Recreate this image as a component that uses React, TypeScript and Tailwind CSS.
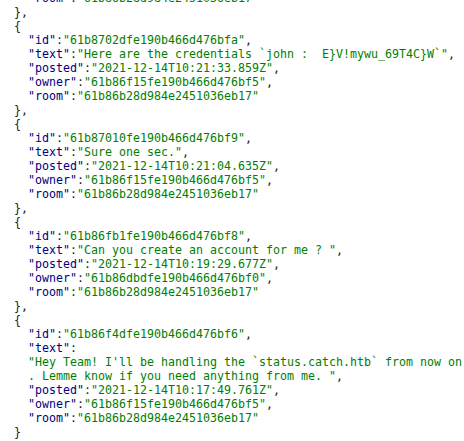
import React from "react";

type Msg = {
  id: string;
  text: string[];
  posted: string;
  owner: string;
  room: string;
  split?: boolean;
};

const messages: Msg[] = [
  {
    id: "61b8702dfe190b466d476bfa",
    text: ["Here are the credentials `john :  E}V!mywu_69T4C}W`"],
    posted: "2021-12-14T10:21:33.859Z",
    owner: "61b86f15fe190b466d476bf5",
    room: "61b86b28d984e2451036eb17",
  },
  {
    id: "61b87010fe190b466d476bf9",
    text: ["Sure one sec."],
    posted: "2021-12-14T10:21:04.635Z",
    owner: "61b86f15fe190b466d476bf5",
    room: "61b86b28d984e2451036eb17",
  },
  {
    id: "61b86fb1fe190b466d476bf8",
    text: ["Can you create an account for me ? "],
    posted: "2021-12-14T10:19:29.677Z",
    owner: "61b86dbdfe190b466d476bf0",
    room: "61b86b28d984e2451036eb17",
  },
  {
    id: "61b86f4dfe190b466d476bf6",
    text: [
      "Hey Team! I'll be handling the `status.catch.htb` from now on",
      ". Lemme know if you need anything from me. ",
    ],
    posted: "2021-12-14T10:17:49.761Z",
    owner: "61b86f15fe190b466d476bf5",
    room: "61b86b28d984e2451036eb17",
    split: true,
  },
];

const Key = ({ k }: { k: string }) => <span className="text-[#000080]">"{k}"</span>;
const Str = ({ v }: { v: string }) => <span className="text-[#008000]">"{v}"</span>;

const Field = ({ k, v, last }: { k: string; v: string; last?: boolean }) => (
  <div className="pl-[28px]">
    <Key k={k} />:<Str v={v} />
    {last ? "" : ","}
  </div>
);

export default function App() {
  return (
    <div
      className="h-[441px] w-[464px] overflow-hidden bg-white text-[11.63px] leading-[14px] text-[#222] whitespace-pre"
      style={{ fontFamily: '"DejaVu Sans Mono", monospace' }}
    >
      <div className="-mt-[9px]">
        <Field k="room" v="61b86b28d984e2451036eb17" last />
        <div className="pl-[14px]">{"},"}</div>
        {messages.map((m, i) => (
          <div key={m.id}>
            <div className="pl-[14px]">{"{"}</div>
            <Field k="id" v={m.id} />
            {m.split ? (
              <>
                <div className="pl-[28px]">
                  <Key k="text" />:
                </div>
                <div className="pl-[28px] text-[#008000]">"{m.text[0]}</div>
                <div className="pl-[28px]">
                  <span className="text-[#008000]">{m.text[1]}"</span>,
                </div>
              </>
            ) : (
              <Field k="text" v={m.text[0]} />
            )}
            <Field k="posted" v={m.posted} />
            <Field k="owner" v={m.owner} />
            <Field k="room" v={m.room} last />
            <div className="pl-[14px]">{i === messages.length - 1 ? "}" : "},"}</div>
          </div>
        ))}
        <div>]</div>
      </div>
    </div>
  );
}
